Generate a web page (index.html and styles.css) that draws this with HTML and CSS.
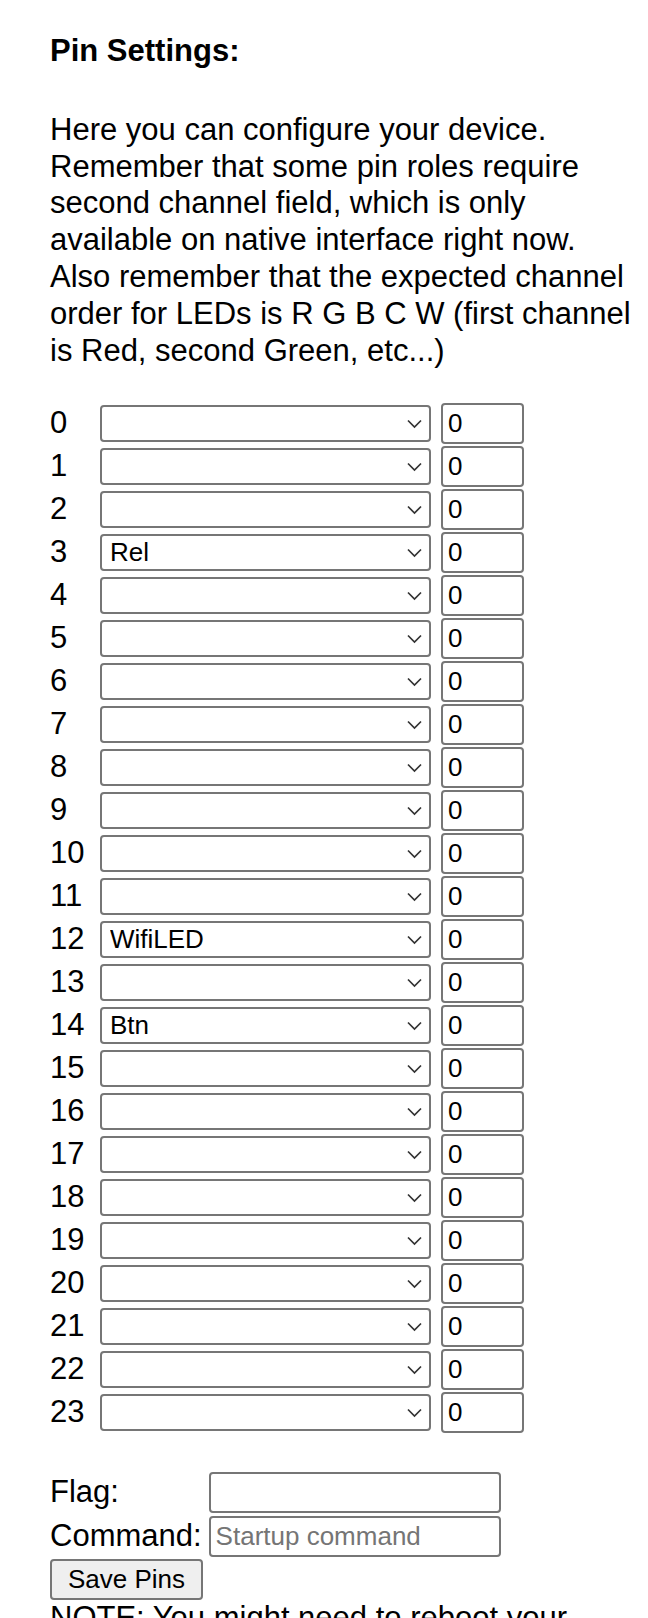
FILE: index.html
```html
<!DOCTYPE html>
<html lang="en">
<head>
    <meta charset="UTF-8">
    <meta name="viewport" content="width=device-width, initial-scale=1.0">
    <title>Pin Settings</title>
    <link rel="stylesheet" href="styles.css">
</head>
<body>
    <div class="page">
        <h3 class="title">Pin Settings:</h3>
        <p class="intro">Here you can configure your device. Remember that some pin roles require second channel field, which is only available on native interface right now. Also remember that the expected channel order for LEDs is R G B C W (first channel is Red, second Green, etc...)</p>

        <form id="pinsForm">
            <div class="pins" id="pins"></div>

            <div class="extra">
                <label for="flag">Flag:</label>
                <input type="text" id="flag" class="field">
                <label for="cmd">Command:</label>
                <input type="text" id="cmd" class="field" placeholder="Startup command">
            </div>
            <button type="button" class="save">Save Pins</button>
        </form>
        <p class="note">NOTE: You might need to reboot your device after changing pins.</p>
    </div>

    <script>
        const roles = ['', 'Rel', 'Rel_n', 'Btn', 'Btn_n', 'LED', 'LED_n', 'WifiLED', 'WifiLED_n', 'PWM', 'DigitalInput', 'ADC'];
        // pin -> role, everything else is empty
        const current = { 3: 'Rel', 12: 'WifiLED', 14: 'Btn' };

        const pins = document.getElementById('pins');
        for (let i = 0; i < 24; i++) {
            const label = document.createElement('label');
            label.htmlFor = `r${i}`;
            label.textContent = i;

            const wrap = document.createElement('span');
            wrap.className = 'select-wrap';
            const select = document.createElement('select');
            select.id = `r${i}`;
            roles.forEach(role => {
                const opt = document.createElement('option');
                opt.value = role;
                opt.textContent = role;
                if ((current[i] || '') === role) opt.selected = true;
                select.appendChild(opt);
            });
            wrap.appendChild(select);
            wrap.insertAdjacentHTML('beforeend',
                '<svg class="chev" width="15" height="10" viewBox="0 0 15 10"><path d="M1 1.5 L7.5 8 L14 1.5" fill="none" stroke="#333" stroke-width="1.7"/></svg>');

            const channel = document.createElement('input');
            channel.type = 'text';
            channel.className = 'channel';
            channel.id = `e${i}`;
            channel.value = '0';

            pins.appendChild(label);
            pins.appendChild(wrap);
            pins.appendChild(channel);
        }
    </script>
</body>
</html>
```

FILE: styles.css
```css
body {
    margin: 0;
    font-family: "Liberation Sans", Arial, sans-serif;
    font-size: 31px;
    line-height: 36.8px;
    color: #000;
    background: #fff;
}
.page {
    padding: 33px 0 0 50px;
    width: 592px;
}
.title {
    font-size: 31px;
    font-weight: bold;
    margin: 0 0 42px;
}
.intro {
    margin: 0 0 33.5px;
}
.pins {
    display: grid;
    grid-template-columns: 40px 331px 83px;
    column-gap: 10px;
    row-gap: 2px;
    align-items: center;
}
.select-wrap {
    position: relative;
    display: block;
}
.select-wrap select {
    appearance: none;
    -webkit-appearance: none;
    display: block;
    width: 100%;
    height: 37px;
    margin: 0;
    padding: 0 30px 0 8px;
    border: 2px solid #767676;
    border-radius: 4px;
    background: #fff;
    color: #000;
    font-family: "Liberation Sans", Arial, sans-serif;
    font-size: 26px;
}
.chev {
    position: absolute;
    right: 9px;
    top: 14px;
    pointer-events: none;
}
.channel, .field {
    box-sizing: border-box;
    height: 41px;
    margin: 0;
    padding: 0 5px;
    border: 2px solid #767676;
    border-radius: 4px;
    background: #fff;
    color: #000;
    font-family: "Liberation Sans", Arial, sans-serif;
    font-size: 26px;
}
.channel {
    width: 83px;
}
.field::placeholder {
    color: #757575;
}
.extra {
    display: grid;
    grid-template-columns: auto 292px;
    column-gap: 7px;
    row-gap: 3px;
    align-items: center;
    justify-content: start;
    margin-top: 39.5px;
}
.field {
    width: 292px;
}
.save {
    display: block;
    margin-top: 2px;
    height: 41px;
    padding: 0 16px;
    border: 2px solid #767676;
    border-radius: 4px;
    background: #efefef;
    color: #000;
    font-family: "Liberation Sans", Arial, sans-serif;
    font-size: 26px;
}
.note {
    margin: 0;
}
```
